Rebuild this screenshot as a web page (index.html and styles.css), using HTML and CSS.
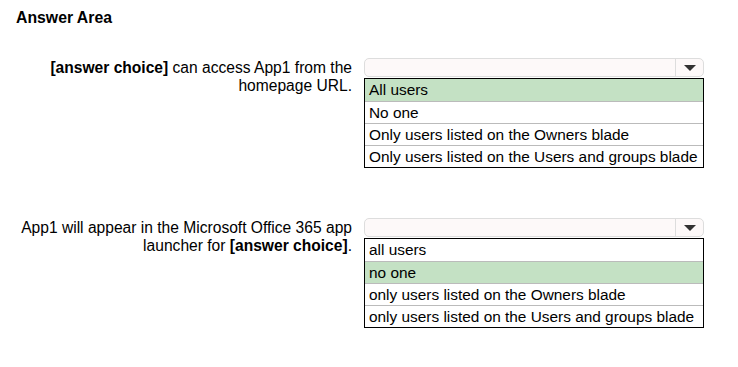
FILE: index.html
```html
<!DOCTYPE html>
<html lang="en">
<head>
  <meta charset="UTF-8" />
  <title>Answer Area</title>
  <link rel="stylesheet" href="styles.css">
</head>
<body>
  <h1 class="title">Answer Area</h1>

  <!-- First statement -->
  <div class="question q1">
    <div class="statement">
      <b>[answer choice]</b> can access App1 from the homepage URL.
    </div>
    <div class="answer">
      <div class="select">
        <span class="select-arrow"><span class="tri"></span></span>
      </div>
      <ul class="options">
        <li class="picked">All users</li>
        <li>No one</li>
        <li>Only users listed on the Owners blade</li>
        <li>Only users listed on the Users and groups blade</li>
      </ul>
    </div>
  </div>

  <!-- Second statement -->
  <div class="question q2">
    <div class="statement">
      App1 will appear in the Microsoft Office 365 app launcher for <b>[answer choice]</b>.
    </div>
    <div class="answer">
      <div class="select">
        <span class="select-arrow"><span class="tri"></span></span>
      </div>
      <ul class="options">
        <li>all users</li>
        <li class="picked">no one</li>
        <li>only users listed on the Owners blade</li>
        <li>only users listed on the Users and groups blade</li>
      </ul>
    </div>
  </div>
</body>
</html>
```

FILE: styles.css
```css
* {
  box-sizing: border-box;
}

body {
  margin: 0;
  padding: 9px 12px 0;
  background: #fff;
  color: #000;
  font-family: "Liberation Sans", Arial, sans-serif;
}

.title {
  margin: 0 0 0 4px;
  font-size: 15.8px;
  line-height: 17px;
  font-weight: bold;
}

.question {
  display: flex;
  align-items: flex-start;
  gap: 12px;
}

.q1 {
  margin-top: 32px;
}

.q2 {
  margin-top: 50px;
}

.statement {
  width: 340px;
  text-align: right;
  font-size: 15.6px;
  line-height: 18px;
  padding-top: 1px;
}

.answer {
  width: 340px;
}

.select {
  height: 19px;
  margin-bottom: 1px;
  border: 1px solid #ddd;
  border-radius: 5px;
  background: #fdf9f9;
  display: flex;
  justify-content: flex-end;
}

.select-arrow {
  width: 28px;
  border-left: 1px solid #ddd;
  display: flex;
  align-items: center;
  justify-content: center;
}

.tri {
  width: 0;
  height: 0;
  border-left: 6px solid transparent;
  border-right: 6px solid transparent;
  border-top: 6px solid #333;
}

.options {
  list-style: none;
  margin: 0;
  padding: 0;
  border: 1px solid #000;
}

.options li {
  height: 22px;
  padding: 2px 0 0 4px;
  font-size: 15.4px;
  line-height: 18px;
  border-top: 1px solid #bbb;
}

.options li:first-child {
  border-top: none;
}

.options .picked {
  background: #c4e1c4;
}
```
